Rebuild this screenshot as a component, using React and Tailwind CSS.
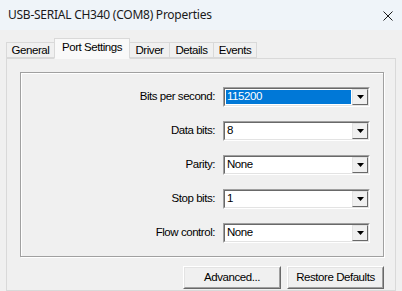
const rows = [
    { label: 'Bits per second:', value: '115200', focused: true },
    { label: 'Data bits:', value: '8' },
    { label: 'Parity:', value: 'None' },
    { label: 'Stop bits:', value: '1' },
    { label: 'Flow control:', value: 'None' },
];

const tabs = [
    { name: 'General', width: 'w-[49px]' },
    { name: 'Port Settings', width: 'w-[76px]' },
    { name: 'Driver', width: 'w-[41px]' },
    { name: 'Details', width: 'w-[45px]' },
    { name: 'Events', width: 'w-[44px]' },
];

function Combo({ value, focused }) {
    return (
        <div className="flex h-[20px] w-[147px] border border-t-[#a0a0a0] border-l-[#a0a0a0] border-b-white border-r-white">
            <div className="flex flex-1 border border-t-[#696969] border-l-[#696969] border-b-[#e3e3e3] border-r-[#e3e3e3] bg-white">
                <div className="flex flex-1 items-center p-[1px]">
                    <div className={`flex h-full flex-1 items-center pl-[1px] ${focused ? 'bg-[#0078d7] text-white' : 'text-black'}`}>{value}</div>
                </div>
                <div className="flex w-[16px] items-center justify-center border border-t-[#e3e3e3] border-l-[#e3e3e3] border-b-[#696969] border-r-[#696969] bg-[#f0f0f0]">
                    <svg width="7" height="4" viewBox="0 0 7 4">
                        <polygon points="0,0 7,0 3.5,4" fill="#000" />
                    </svg>
                </div>
            </div>
        </div>
    );
}

function Button({ children, width }) {
    return (
        <div className={`flex h-[23px] ${width} items-center justify-center border border-t-white border-l-white border-b-[#696969] border-r-[#696969] bg-[#f0f0f0]`}>
            <div className="flex h-full w-full items-center justify-center border border-t-[#e3e3e3] border-l-[#e3e3e3] border-b-[#a0a0a0] border-r-[#a0a0a0]">{children}</div>
        </div>
    );
}

export default function App() {
    return (
        <div className="flex h-[291px] w-[402px] flex-col overflow-hidden bg-[#f0f0f0] font-['Liberation_Sans',Arial,sans-serif] text-[11.5px] tracking-[-0.45px] text-black">
            <div className="flex h-[30px] shrink-0 items-center justify-between bg-[#eff4f9] pl-[8px] pr-[9px]">
                <span className="font-['Noto_Sans',sans-serif] text-[12px] tracking-[-0.25px] text-[#1a1a1a]">USB-SERIAL CH340 (COM8) Properties</span>
                <svg width="10" height="10" viewBox="0 0 10 10" className="mt-[1px]">
                    <path d="M0.5 0.5 L9.5 9.5 M9.5 0.5 L0.5 9.5" stroke="#1a1a1a" strokeWidth="1" />
                </svg>
            </div>

            <div className="flex flex-1 flex-col px-[6px] pt-[8px]">
                <div className="flex h-[20px] items-end">
                    {tabs.map((tab) => {
                        const selected = tab.name === 'Port Settings';
                        return (
                            <div
                                key={tab.name}
                                className={`relative flex ${tab.width} items-center justify-center border border-[#d9d9d9] ${
                                    selected
                                        ? 'z-10 -mb-[1px] -ml-[1px] h-[21px] border-b-[#f9f9f9] bg-[#f9f9f9] pb-[2px]'
                                        : 'h-[16px] -ml-[1px] bg-[#f0f0f0] pt-[1px] first:ml-0'
                                }`}
                            >
                                {tab.name}
                            </div>
                        );
                    })}
                </div>

                <div className="flex flex-1 flex-col border border-[#d9d9d9] bg-[#f0f0f0] pl-[13px] pr-[11px] pt-[13px]">
                    <div className="flex flex-col gap-[14px] border border-[#a0a0a0] pb-[13px] pt-[14px] pr-[13px] shadow-[inset_1px_1px_0_#fff,1px_1px_0_#fff]">
                        {rows.map((row) => (
                            <div key={row.label} className="flex h-[20px] items-center justify-end gap-[8px]">
                                <span>{row.label}</span>
                                <Combo value={row.value} focused={row.focused} />
                            </div>
                        ))}
                    </div>

                    <div className="mt-[9px] flex justify-end gap-[6px]">
                        <Button width="w-[98px]">Advanced...</Button>
                        <Button width="w-[97px]">Restore Defaults</Button>
                    </div>
                </div>
            </div>
        </div>
    );
}
